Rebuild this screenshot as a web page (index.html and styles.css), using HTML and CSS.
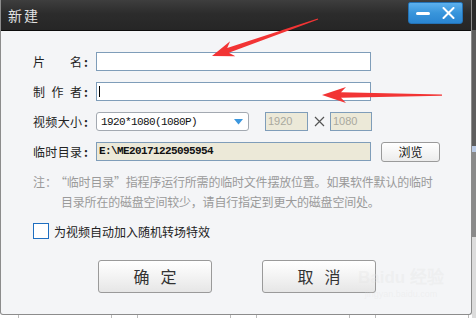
FILE: index.html
```html
<!DOCTYPE html>
<html lang="zh-CN">
<head>
  <meta charset="UTF-8" />
  <title>新建</title>
  <link rel="stylesheet" href="styles.css">
</head>
<body>
  <div class="screen">
    <div class="main">
      <div class="dialog">
        <div class="titlebar">
          <span class="title">新建</span>
          <div class="win-btns">
            <span class="win-min"></span>
            <svg class="win-close" width="13" height="12" viewBox="0 0 13 12">
              <path d="M1.5 1 L11.5 11 M11.5 1 L1.5 11" stroke="#fff" stroke-width="2" stroke-linecap="round" fill="none"/>
            </svg>
          </div>
        </div>

        <div class="content">
          <div class="row">
            <span class="lbl"><span class="lbl-t"><i>片</i><i>名</i></span><span class="colon">:</span></span>
            <div class="field wide"></div>
          </div>
          <div class="row">
            <span class="lbl"><span class="lbl-t"><i>制</i><i>作</i><i>者</i></span><span class="colon">:</span></span>
            <div class="field wide"><span class="caret"></span></div>
          </div>
          <div class="row">
            <span class="lbl"><span class="lbl-t"><i>视</i><i>频</i><i>大</i><i>小</i></span><span class="colon">:</span></span>
            <div class="field combo">
              <span>1920*1080(1080P)</span>
              <svg width="9" height="6" viewBox="0 0 9 6"><path d="M0 0 H9 L4.5 5.5 Z" fill="#3b97de"/></svg>
            </div>
            <div class="field num">1920</div>
            <span class="times">
              <svg width="11" height="11" viewBox="0 0 11 11"><path d="M1 1 L10 10 M10 1 L1 10" stroke="#555" stroke-width="1.2" fill="none"/></svg>
            </span>
            <div class="field num">1080</div>
          </div>
          <div class="row">
            <span class="lbl"><span class="lbl-t"><i>临</i><i>时</i><i>目</i><i>录</i></span><span class="colon">:</span></span>
            <div class="field dir">E:\ME20171225095954</div>
            <div class="browse">浏览</div>
          </div>

          <div class="note">
            <span class="note-tag">注：</span>
            <p>“临时目录”指程序运行所需的临时文件摆放位置。如果软件默认的临时<br><span class="indent">目录所在的磁盘空间较少，请自行指定到更大的磁盘空间处。</span></p>
          </div>

          <div class="check-row">
            <span class="checkbox"></span>
            <span>为视频自动加入随机转场特效</span>
          </div>

          <div class="actions">
            <div class="btn">确定</div>
            <div class="btn">取消</div>
          </div>
        </div>
      </div>
      <div class="below">
        <span class="cell"></span>
        <span class="cell"></span>
        <span class="cell"></span>
        <span class="cell"></span>
      </div>
    </div>
    <div class="side"></div>

    <!-- watermark -->
    <div class="watermark">
      <span class="wm-big">Bai<b>du</b> 经验</span>
      <span class="wm-small">jingyan.baidu.com</span>
    </div>

    <!-- red annotation arrows -->
    <svg class="arrows" width="476" height="318" viewBox="0 0 476 318">
      <polygon points="212,56 235.4,56.3 228.8,52.8 318.2,19.6 317.8,18.4 227.2,48 230.1,41.2" fill="#f23434"/>
      <polygon points="322,95 346,103 341,97.8 442,95.8 442,94.4 341,92.2 346,87" fill="#f23434"/>
    </svg>
  </div>
</body>
</html>
```

FILE: styles.css
```css
body {
  margin: 0;
  font-family: "Noto Sans CJK SC", sans-serif;
  font-size: 12px;
  color: #222;
}
.screen {
  position: relative;
  display: flex;
  width: 476px;
  height: 318px;
  overflow: hidden;
  background: #fff;
}
.main {
  width: 472px;
}
.dialog {
  box-sizing: border-box;
  height: 315px;
  display: flex;
  flex-direction: column;
  background: #f4f5f7;
  border: 1px solid #8c8c8c;
  border-top: none;
  border-radius: 0 0 3px 3px;
}
.titlebar {
  height: 30px;
  flex-shrink: 0;
  display: flex;
  justify-content: space-between;
  background: linear-gradient(#3e3e3e, #2c2c2c 45%, #262626);
  border-bottom: 1px solid #0c0c0c;
}
.title {
  padding-left: 7px;
  line-height: 31px;
  font-size: 14px;
  letter-spacing: 2px;
  color: #e2e2e2;
}
.win-btns {
  box-sizing: border-box;
  display: flex;
  align-items: center;
  justify-content: space-between;
  width: 55px;
  height: 22px;
  margin-top: 2px;
  margin-right: 8px;
  padding: 0 7px 0 7px;
  background: linear-gradient(#5db0ec, #3895db 50%, #2a86d2);
  border: 1px solid #2472b5;
  border-radius: 2px 2px 3px 3px;
}
.win-min {
  width: 14px;
  height: 3px;
  background: #fff;
  border-radius: 2px;
}

.content {
  flex: 1;
  padding: 21px 0 0 32px;
}
.row {
  display: flex;
  align-items: center;
  height: 19px;
  margin-bottom: 11px;
}
.lbl {
  display: flex;
  width: 56px;
  margin-right: 7px;
  color: #222;
}
.lbl-t {
  display: flex;
  justify-content: space-between;
  width: 49px;
}
.lbl-t i {
  font-style: normal;
}
.colon {
  margin-left: 2px;
  font-weight: bold;
}
.field {
  box-sizing: border-box;
  height: 19px;
  border: 1px solid #7f9db9;
  background: #fff;
}
.field.wide {
  width: 275px;
  padding: 3px 0 0 2px;
}
.caret {
  display: block;
  width: 1px;
  height: 11px;
  background: #000;
}
.combo {
  display: flex;
  align-items: center;
  justify-content: space-between;
  width: 153px;
  padding: 0 5px 0 4px;
  border-color: #a3a9b1;
  border-radius: 3px;
  font-family: "Liberation Mono", monospace;
  font-size: 11px;
  letter-spacing: -0.6px;
  color: #111;
}
.num {
  width: 43px;
  margin-left: 16px;
  padding-left: 2px;
  background: #ece9d8;
  font-family: "Liberation Sans", sans-serif;
  font-size: 11px;
  line-height: 17px;
  color: #a9a89e;
}
.times + .num {
  margin-left: 0;
  width: 42px;
}
.times {
  display: flex;
  justify-content: center;
  align-items: center;
  width: 22px;
}
.dir {
  width: 275px;
  padding-left: 2px;
  background: #ece9d8;
  font-family: "Liberation Mono", monospace;
  font-size: 11px;
  letter-spacing: -0.6px;
  font-weight: bold;
  line-height: 17px;
  color: #111;
}
.browse {
  box-sizing: border-box;
  width: 59px;
  height: 20px;
  margin-left: 10px;
  border: 1px solid #9a9a9a;
  border-radius: 3px;
  background: linear-gradient(#fff, #ececec);
  text-align: center;
  line-height: 18px;
  color: #111;
}

.note {
  display: flex;
  color: #9a9a9a;
  line-height: 20px;
}
.note-tag {
  width: 22px;
}
.note p {
  margin: 0;
  white-space: nowrap;
  letter-spacing: -0.2px;
}
.note .indent {
  margin-left: 6px;
}
.check-row {
  display: flex;
  align-items: center;
  height: 16px;
  margin-top: 11px;
}
.checkbox {
  box-sizing: border-box;
  width: 16px;
  height: 16px;
  margin-right: 5px;
  border: 1px solid #1e6ec0;
  background: #fff;
}
.actions {
  display: flex;
  gap: 50px;
  margin: 21px 0 0 65px;
}
.btn {
  box-sizing: border-box;
  width: 114px;
  height: 33px;
  padding-left: 11px;
  border: 1px solid #9a9a9a;
  border-radius: 3px;
  background: linear-gradient(#ffffff, #f3f3f3 50%, #e6e6e6);
  text-align: center;
  font-size: 16px;
  line-height: 31px;
  letter-spacing: 11px;
  color: #333;
}

.below {
  display: flex;
  height: 3px;
  padding-left: 18px;
  gap: 25px;
}
.cell {
  box-sizing: border-box;
  width: 94px;
  border-left: 1px solid #bbb;
  border-right: 1px solid #bbb;
}
.side {
  width: 4px;
  height: 318px;
  background: linear-gradient(#2a2a2a 0, #2a2a2a 30px, #5e5e5e 30px, #5e5e5e 146px, #b9c9e4 146px, #b9c9e4 152px, #8a8a8a 152px, #8a8a8a 237px, #dcdcdc 237px);
}

.watermark {
  position: absolute;
  left: 358px;
  top: 268px;
  display: flex;
  flex-direction: column;
  align-items: center;
  color: rgba(225, 225, 225, 0.3);
  font-family: "Liberation Sans", sans-serif;
}
.wm-big {
  font-size: 17px;
  font-weight: bold;
  line-height: 20px;
}
.wm-small {
  font-size: 9px;
  line-height: 12px;
}
.arrows {
  position: absolute;
  left: 0;
  top: 0;
  pointer-events: none;
}
```
